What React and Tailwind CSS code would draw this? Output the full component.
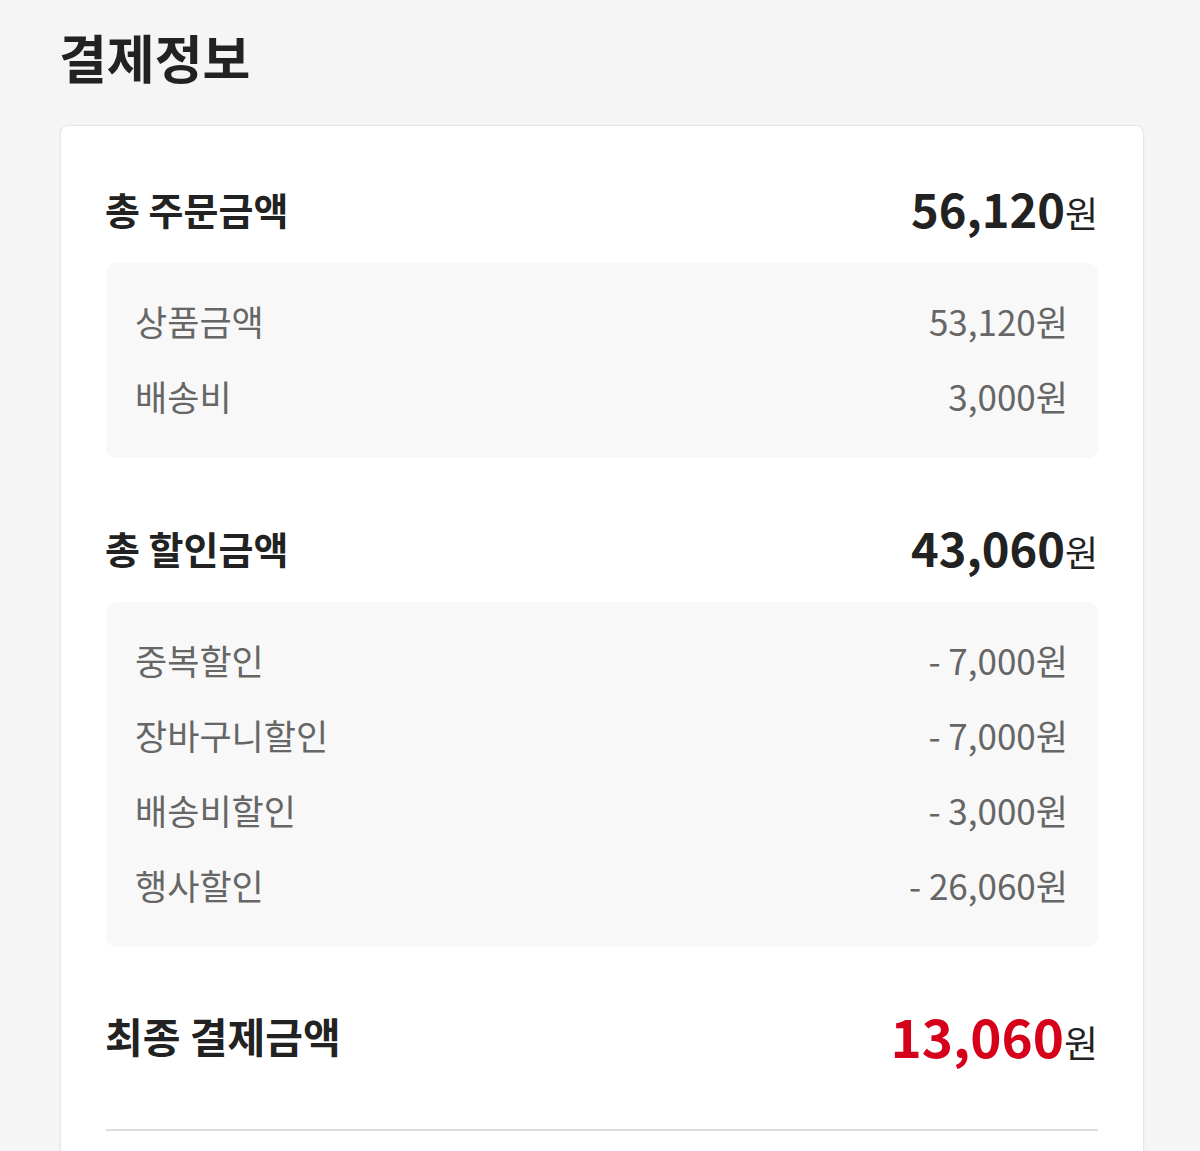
export default function App() {
  const orderRows = [
    { label: "상품금액", value: "53,120원" },
    { label: "배송비", value: "3,000원" },
  ];
  const discountRows = [
    { label: "중복할인", value: "- 7,000원" },
    { label: "장바구니할인", value: "- 7,000원" },
    { label: "배송비할인", value: "- 3,000원" },
    { label: "행사할인", value: "- 26,060원" },
  ];

  return (
    <div
      className="min-h-screen bg-[#f5f5f5] pb-10"
      style={{ fontFamily: '"Noto Sans CJK KR", "Noto Sans", sans-serif' }}
    >
      <h1 className="pl-[59px] pt-[27px] text-[52px] font-bold leading-[60px] text-[#222]">
        결제정보
      </h1>

      <div className="ml-[60px] mr-[56px] mt-[38px] rounded-[8px] border border-[#e6e6e6] bg-white px-[45px] pt-[54px] pb-[60px] shadow-[0_1px_3px_rgba(0,0,0,0.04)]">
        <Header label="총 주문금액" amount="56,120" />
        <Box rows={orderRows} />

        <div className="mt-[61px]">
          <Header label="총 할인금액" amount="43,060" />
        </div>
        <Box rows={discountRows} />

        <div className="mt-[57px] flex h-[64px] items-center justify-between">
          <span className="-ml-[1px] text-[41px] font-bold text-[#222]">최종 결제금액</span>
          <span className="flex items-baseline">
            <span className="text-[53px] font-bold text-[#d7001b]">13,060</span>
            <span className="text-[37px] text-[#222]">원</span>
          </span>
        </div>

        <div className="mt-[61px] h-[2px] bg-[#dddddd]" />
      </div>
    </div>
  );
}

function Header({ label, amount }) {
  return (
    <div className="flex h-[56px] items-center justify-between">
      <span className="-ml-[1px] text-[38px] font-bold text-[#222]">{label}</span>
      <span className="flex items-baseline">
        <span className="text-[47px] font-bold text-[#222]">{amount}</span>
        <span className="text-[36px] text-[#222]">원</span>
      </span>
    </div>
  );
}

function Box({ rows }) {
  return (
    <div className="mt-[27px] rounded-[10px] bg-[#f8f8f8] px-[30px] pt-[21px] pb-[24px]">
      {rows.map((row) => (
        <div key={row.label} className="flex h-[75px] items-center justify-between">
          <span className="-ml-[1px] text-[35px] text-[#666]">{row.label}</span>
          <span className="text-[35px] text-[#666]">{row.value}</span>
        </div>
      ))}
    </div>
  );
}
